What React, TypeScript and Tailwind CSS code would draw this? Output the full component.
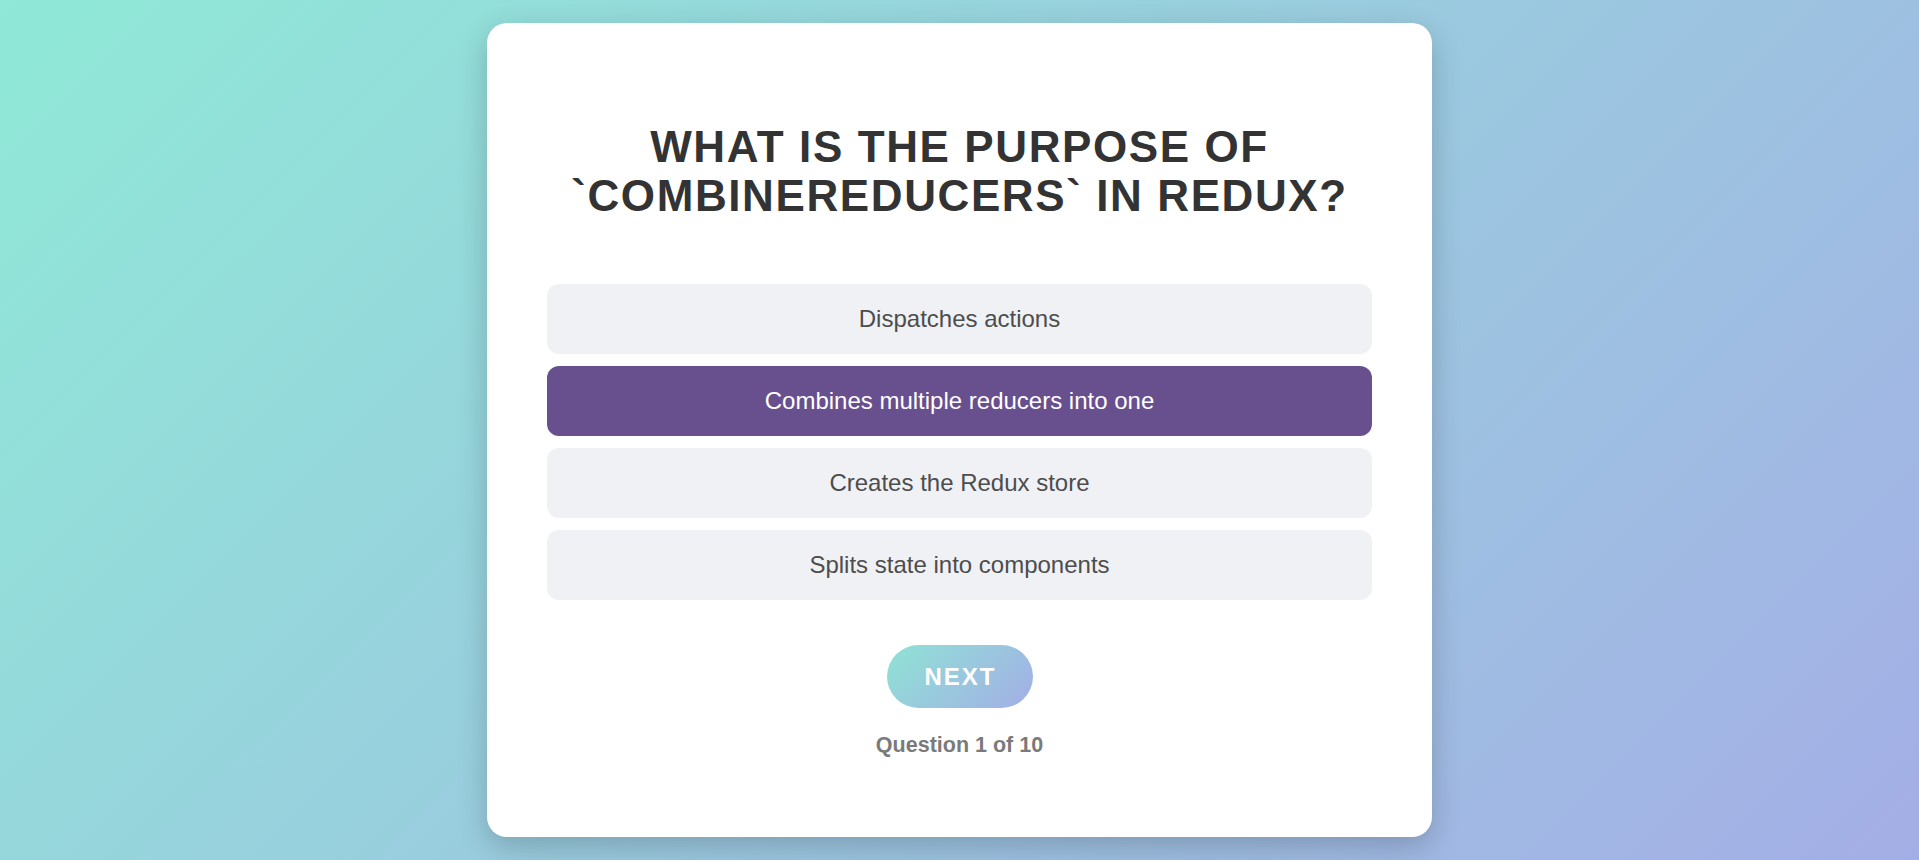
const OPTIONS = [
  "Dispatches actions",
  "Combines multiple reducers into one",
  "Creates the Redux store",
  "Splits state into components",
];

export default function App() {
  const selected = 1;

  return (
    <div className="flex min-h-screen items-center justify-center bg-[linear-gradient(135deg,#8fe9d7_0%,#a4aee6_100%)] font-['Liberation_Sans',Arial,sans-serif]">
      <div className="flex w-[945px] flex-col items-center rounded-[20px] bg-white px-[60px] pt-[100px] pb-[79px] shadow-[0_10px_30px_rgba(0,0,0,0.2)]">
        <h2 className="text-center text-[44px] leading-[1.1] font-bold tracking-[1.6px] text-[#333] uppercase">
          What is the purpose of
          <br />
          `combineReducers` in Redux?
        </h2>

        <div className="mt-[64px] flex w-full flex-col gap-3">
          {OPTIONS.map((opt, i) => (
            <button
              key={opt}
              className={
                i === selected
                  ? "w-full rounded-xl bg-[#684f8e] py-[21px] text-center text-[24px] leading-[28px] text-white"
                  : "w-full rounded-xl bg-[#f0f1f5] py-[21px] text-center text-[24px] leading-[28px] text-[#4d4d4d]"
              }
            >
              {opt}
            </button>
          ))}
        </div>

        <button className="mt-[45px] flex h-[63px] w-[146px] items-center justify-center rounded-full bg-[linear-gradient(135deg,#8fe3d5_0%,#a3aee6_100%)] pl-[2px] text-[24px] font-bold tracking-[2px] text-white">
          NEXT
        </button>

        <p className="mt-[25px] text-[21.5px] leading-[1.15] font-bold text-[#7a7a7a]">
          Question 1 of 10
        </p>
      </div>
    </div>
  );
}
